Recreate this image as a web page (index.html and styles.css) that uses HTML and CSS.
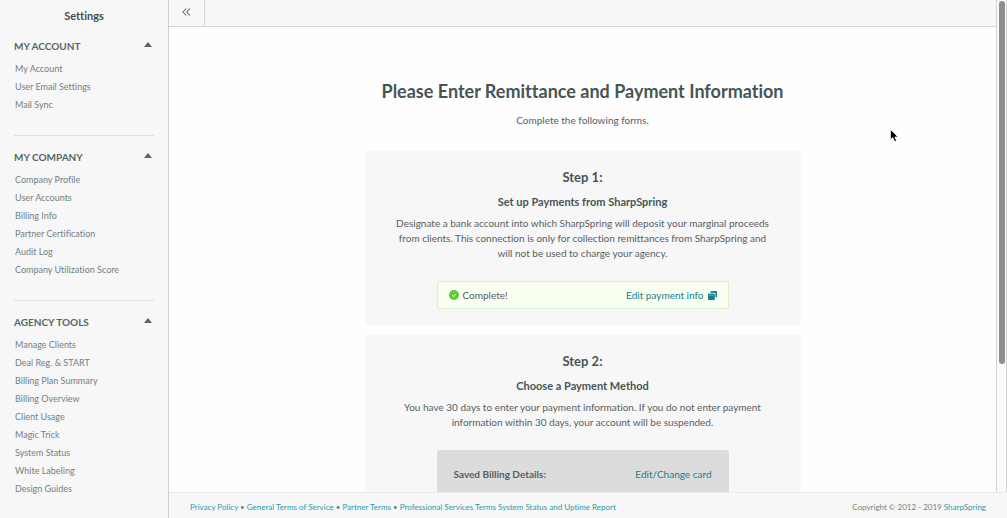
FILE: index.html
```html
<!DOCTYPE html>
<html lang="en">
  <head>
    <meta charset="UTF-8" />
    <meta name="viewport" content="width=device-width, initial-scale=1.0" />
    <title>SharpSpring - Settings</title>
    <link rel="stylesheet" href="styles.css">
  </head>
  <body>
    <aside class="sidebar">
      <h2 class="sidebar-title">Settings</h2>

      <nav class="menu">
        <section class="menu-section">
          <button class="menu-heading" type="button">MY ACCOUNT <span class="caret"></span></button>
          <ul>
            <li><a href="#">My Account</a></li>
            <li><a href="#">User Email Settings</a></li>
            <li><a href="#">Mail Sync</a></li>
          </ul>
        </section>

        <section class="menu-section">
          <button class="menu-heading" type="button">MY COMPANY <span class="caret"></span></button>
          <ul>
            <li><a href="#">Company Profile</a></li>
            <li><a href="#">User Accounts</a></li>
            <li><a href="#">Billing Info</a></li>
            <li><a href="#">Partner Certification</a></li>
            <li><a href="#">Audit Log</a></li>
            <li><a href="#">Company Utilization Score</a></li>
          </ul>
        </section>

        <section class="menu-section">
          <button class="menu-heading" type="button">AGENCY TOOLS <span class="caret"></span></button>
          <ul>
            <li><a href="#">Manage Clients</a></li>
            <li><a href="#">Deal Reg. &amp; START</a></li>
            <li><a href="#">Billing Plan Summary</a></li>
            <li><a href="#">Billing Overview</a></li>
            <li><a href="#">Client Usage</a></li>
            <li><a href="#">Magic Trick</a></li>
            <li><a href="#">System Status</a></li>
            <li><a href="#">White Labeling</a></li>
            <li><a href="#">Design Guides</a></li>
          </ul>
        </section>
      </nav>
    </aside>

    <div class="page">
      <div class="page-body">
        <div class="page-column">
          <header class="topbar">
            <button class="collapse" type="button" aria-label="Collapse menu">
              <svg width="9" height="8" viewBox="0 0 9 8" fill="none" stroke="#5f6e6c" stroke-width="1.1">
                <path d="M4.2 0.5 L1 4 L4.2 7.5 M8 0.5 L4.8 4 L8 7.5" />
              </svg>
            </button>
          </header>

          <main class="content">
            <h1>Please Enter Remittance and Payment Information</h1>
            <p class="intro">Complete the following forms.</p>

            <section class="step">
              <h2>Step 1:</h2>
              <h3>Set up Payments from SharpSpring</h3>
              <p>Designate a bank account into which SharpSpring will deposit your marginal proceeds from clients. This connection is only for collection remittances from SharpSpring and will not be used to charge your agency.</p>
              <div class="status">
                <span class="status-label">
                  <svg width="10" height="10" viewBox="0 0 10 10">
                    <circle cx="5" cy="5" r="5" fill="#5fc93c" />
                    <path d="M3 5.1 L4.5 6.5 L7 3.7" fill="none" stroke="#fff" stroke-width="1" />
                  </svg>
                  Complete!
                </span>
                <a href="#">
                  Edit payment info
                  <svg width="9" height="9" viewBox="0 0 9 9">
                    <path d="M3.4 0 H8 Q9 0 9 1 V5.4 Q9 6.4 8 6.4 H7.5 V2.8 Q7.5 1.7 6.4 1.7 H2.4 V1 Q2.4 0 3.4 0 Z" fill="#16808a" />
                    <path d="M1 2.4 H5.8 Q6.8 2.4 6.8 3.4 V8 Q6.8 9 5.8 9 H1 Q0 9 0 8 V3.4 Q0 2.4 1 2.4 Z" fill="#16808a" />
                    <path d="M1.1 4 H5.7" stroke="#9fd0cf" stroke-width="0.6" />
                  </svg>
                </a>
              </div>
            </section>

            <section class="step">
              <h2>Step 2:</h2>
              <h3>Choose a Payment Method</h3>
              <p>You have 30 days to enter your payment information. If you do not enter payment information within 30 days, your account will be suspended.</p>
              <div class="billing">
                <strong>Saved Billing Details:</strong>
                <a href="#">Edit/Change card</a>
              </div>
            </section>
          </main>
        </div>

        <div class="scrollbar"><div class="thumb"></div></div>
      </div>

      <footer class="footer">
        <div>
          <a href="#">Privacy Policy</a> • <a href="#">General Terms of Service</a> • <a href="#">Partner Terms</a> • <a href="#">Professional Services Terms</a> <a href="#">System Status and Uptime Report</a>
        </div>
        <div>Copyright © 2012 - 2019 <a href="#">SharpSpring</a></div>
      </footer>
    </div>

    <svg class="cursor" width="9" height="14" viewBox="0 0 9 14">
      <path d="M0.5 0.5 V10.6 L2.8 8.6 L4.6 12.6 L6.5 11.8 L4.8 8 H8 Z" fill="#000" stroke="#fff" stroke-width="0.7" />
    </svg>
  </body>
</html>
```

FILE: styles.css
```css
* {
  box-sizing: border-box;
}

body {
  margin: 0;
  height: 100vh;
  display: flex;
  overflow: hidden;
  background: #fefefe;
  color: #57605f;
  font-family: Lato, "Liberation Sans", sans-serif;
  font-size: 10px;
  line-height: 15px;
  font-variant-ligatures: none;
}

h1, h2, h3, p, ul {
  margin: 0;
  padding: 0;
}

a {
  color: #16808a;
  text-decoration: none;
}

button {
  border: 0;
  padding: 0;
  background: none;
  font-family: inherit;
  cursor: pointer;
}

/* sidebar */
.sidebar {
  flex: 0 0 169px;
  padding: 8px 14px;
  background: #f7f7f7;
  border-right: 1px solid #cfcfd1;
  overflow: hidden;
}

.sidebar-title {
  font-size: 11px;
  line-height: 16px;
  text-align: center;
  color: #3f4f4e;
  margin-bottom: 14px;
}

.menu-section + .menu-section {
  margin-top: 21px;
  padding-top: 13px;
  border-top: 1px solid #dfdfe1;
}

.menu-heading {
  display: flex;
  justify-content: space-between;
  width: 100%;
  padding-right: 2px;
  font-size: 10px;
  font-weight: bold;
  line-height: 16px;
  color: #566765;
}

.caret {
  margin-top: 4px;
  height: 5px;
  border: 4px solid transparent;
  border-top: 0;
  border-bottom: 5px solid #566765;
}

.menu ul {
  margin-top: 6px;
  padding-left: 1px;
  list-style: none;
}

.menu li {
  font-size: 9px;
  line-height: 18px;
}

.menu a {
  color: #73817f;
}

/* page */
.page {
  flex: 1;
  min-width: 0;
  display: flex;
  flex-direction: column;
}

.page-body {
  flex: 1;
  min-height: 0;
  display: flex;
}

.page-column {
  flex: 1;
  min-width: 0;
  display: flex;
  flex-direction: column;
}

.topbar {
  flex: 0 0 27px;
  display: flex;
  background: #f7f7f7;
  border-bottom: 1px solid #d6d6d8;
}

.collapse {
  width: 36px;
  padding-bottom: 4px;
  border-right: 1px solid #d6d6d8;
}

.content {
  flex: 1;
  min-height: 0;
  padding: 52px 20px 0;
  overflow: hidden;
  text-align: center;
}

.content h1 {
  font-size: 18px;
  line-height: 24px;
  color: #465554;
}

.intro {
  margin: 10px 0 23px;
}

.step {
  max-width: 436px;
  margin: 0 auto 10px;
  padding: 18px 28px 16px;
  background: #f7f7f7;
  border-radius: 2px;
}

.step h2 {
  font-size: 13px;
  line-height: 16px;
  color: #465554;
}

.step h3 {
  margin: 9px 0 6px;
  font-size: 11px;
  line-height: 16px;
  color: #465554;
}

.status,
.billing {
  max-width: 292px;
  margin: 20px auto 0;
  display: flex;
  justify-content: space-between;
  align-items: center;
  border-radius: 2px;
}

.status {
  padding: 6px 11px;
  line-height: 14px;
  background: #f9fff0;
  border: 1px solid #dcefcf;
}

.status-label,
.status a {
  display: flex;
  align-items: center;
  gap: 4px;
}

.billing {
  height: 80px;
  padding: 17px;
  align-items: flex-start;
  background: #dcdcdc;
}

.scrollbar {
  flex: 0 0 11px;
  padding: 1px 1px 0 2px;
  background: #fafafa;
  border-left: 1px solid #d3d3d8;
  border-right: 1px solid #d3d3d8;
}

.thumb {
  width: 6px;
  height: 74%;
  border-radius: 3px;
  background: #8e8e8e;
}

.footer {
  flex: 0 0 26px;
  display: flex;
  justify-content: space-between;
  align-items: center;
  padding: 4px 21px 0;
  background: #f7f7f7;
  border-top: 1px solid #ebebeb;
  font-size: 8px;
  color: #777f7e;
}

.footer a {
  color: #1b9dae;
}

/* pointer over the page */
.cursor {
  position: absolute;
  top: 129px;
  left: 890px;
}
```
